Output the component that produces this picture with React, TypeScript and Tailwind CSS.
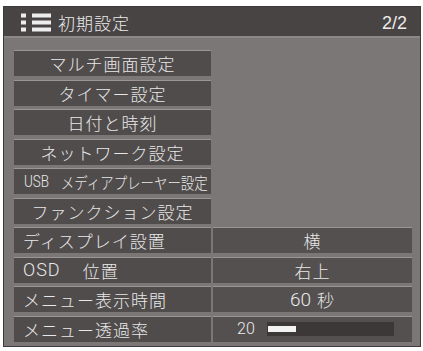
import React from "react";

const jp = { fontFamily: '"Noto Sans CJK JP", "Liberation Sans", sans-serif' };
const lat = { fontFamily: '"Liberation Sans", "Noto Sans CJK JP", sans-serif' };
const thin = { fontFamily: 'Roboto, "Noto Sans CJK JP", sans-serif' };

function MenuIcon() {
  return (
    <svg width="30" height="20" viewBox="0 0 30 20" className="shrink-0">
      {[0, 7, 14].map((y) => (
        <g key={y} fill="#ededed">
          <rect x="0" y={y + 0.5} width="5" height="4" />
          <rect x="11" y={y + 0.5} width="19" height="4" />
        </g>
      ))}
    </svg>
  );
}

function Btn({ children }: { children: React.ReactNode }) {
  return (
    <div
      className="h-[26px] bg-[#504c4c] border-t border-[#9a9696] flex items-center justify-center text-[17px] font-light tracking-[1px] text-[#e8e8e8] leading-none overflow-hidden whitespace-nowrap"
      style={jp}
    >
      {children}
    </div>
  );
}

function Label({ children }: { children: React.ReactNode }) {
  return (
    <div
      className="h-[26px] bg-[#504c4c] border-t border-[#9a9696] flex items-center pl-[9px] text-[17px] font-light tracking-[1px] text-[#e8e8e8] leading-none whitespace-nowrap"
      style={jp}
    >
      {children}
    </div>
  );
}

function Value({ children }: { children: React.ReactNode }) {
  return (
    <div
      className="h-[26px] bg-[#545050] border-t border-[#9a9696] flex items-center justify-center text-[17px] font-light tracking-[1px] text-[#e8e8e8] leading-none whitespace-nowrap"
      style={jp}
    >
      {children}
    </div>
  );
}

export default function App() {
  return (
    <div className="w-[423px] h-[351px] bg-white pt-[6px] pl-[3px]">
      <div className="w-[418px] h-[341px] border border-[#3c3a3a] bg-[#7b7777] flex flex-col">
        <div className="h-[31px] bg-[#484444] border-b-2 border-[#8c8888] flex items-center pl-[17px] pr-[13px] pt-[2px]">
          <MenuIcon />
          <span className="ml-[7px] text-[17px] font-light tracking-[1px] text-[#ececec] leading-none" style={jp}>
            初期設定
          </span>
          <span className="ml-auto text-[18px] text-[#ececec] leading-none" style={lat}>
            2/2
          </span>
        </div>
        <div className="grid grid-cols-[197px_199px] gap-x-[2px] gap-y-[3.5px] pl-[10px] pt-[12px]">
          <Btn>マルチ画面設定</Btn>
          <div />
          <Btn>タイマー設定</Btn>
          <div />
          <Btn>日付と時刻</Btn>
          <div />
          <Btn>ネットワーク設定</Btn>
          <div />
          <div className="h-[26px] bg-[#504c4c] border-t border-[#9a9696] overflow-hidden relative">
            <div
              className="absolute left-[10px] top-0 h-full flex items-center origin-left scale-x-[0.84] text-[16px] font-light text-[#e8e8e8] leading-none whitespace-nowrap"
              style={jp}
            >
              <span style={thin}>USB</span>
              <span className="ml-[14px]">メディアプレーヤー設定</span>
            </div>
          </div>
          <div />
          <Btn>ファンクション設定</Btn>
          <div />
          <Label>ディスプレイ設置</Label>
          <Value>横</Value>
          <Label>
            <span style={thin} className="text-[18px] tracking-[1px]">OSD</span>
            <span className="ml-[22px]">位置</span>
          </Label>
          <Value>右上</Value>
          <Label>メニュー表示時間</Label>
          <Value>
            <span style={thin} className="text-[19px] tracking-[0px]">60</span>
            <span className="ml-[6px]">秒</span>
          </Value>
          <Label>メニュー透過率</Label>
          <div className="h-[26px] bg-[#545050] border-t border-[#9a9696] flex items-center pl-[24px] pr-[18px]">
            <span className="text-[16px] font-light text-[#ebebeb] leading-none w-[30px]" style={thin}>
              20
            </span>
            <div className="flex-1 h-[14px] bg-[#3c3838] flex items-center pl-[1px]">
              <div className="w-[28px] h-[6px] bg-[#f2f2f2]" />
            </div>
          </div>
        </div>
      </div>
    </div>
  );
}
